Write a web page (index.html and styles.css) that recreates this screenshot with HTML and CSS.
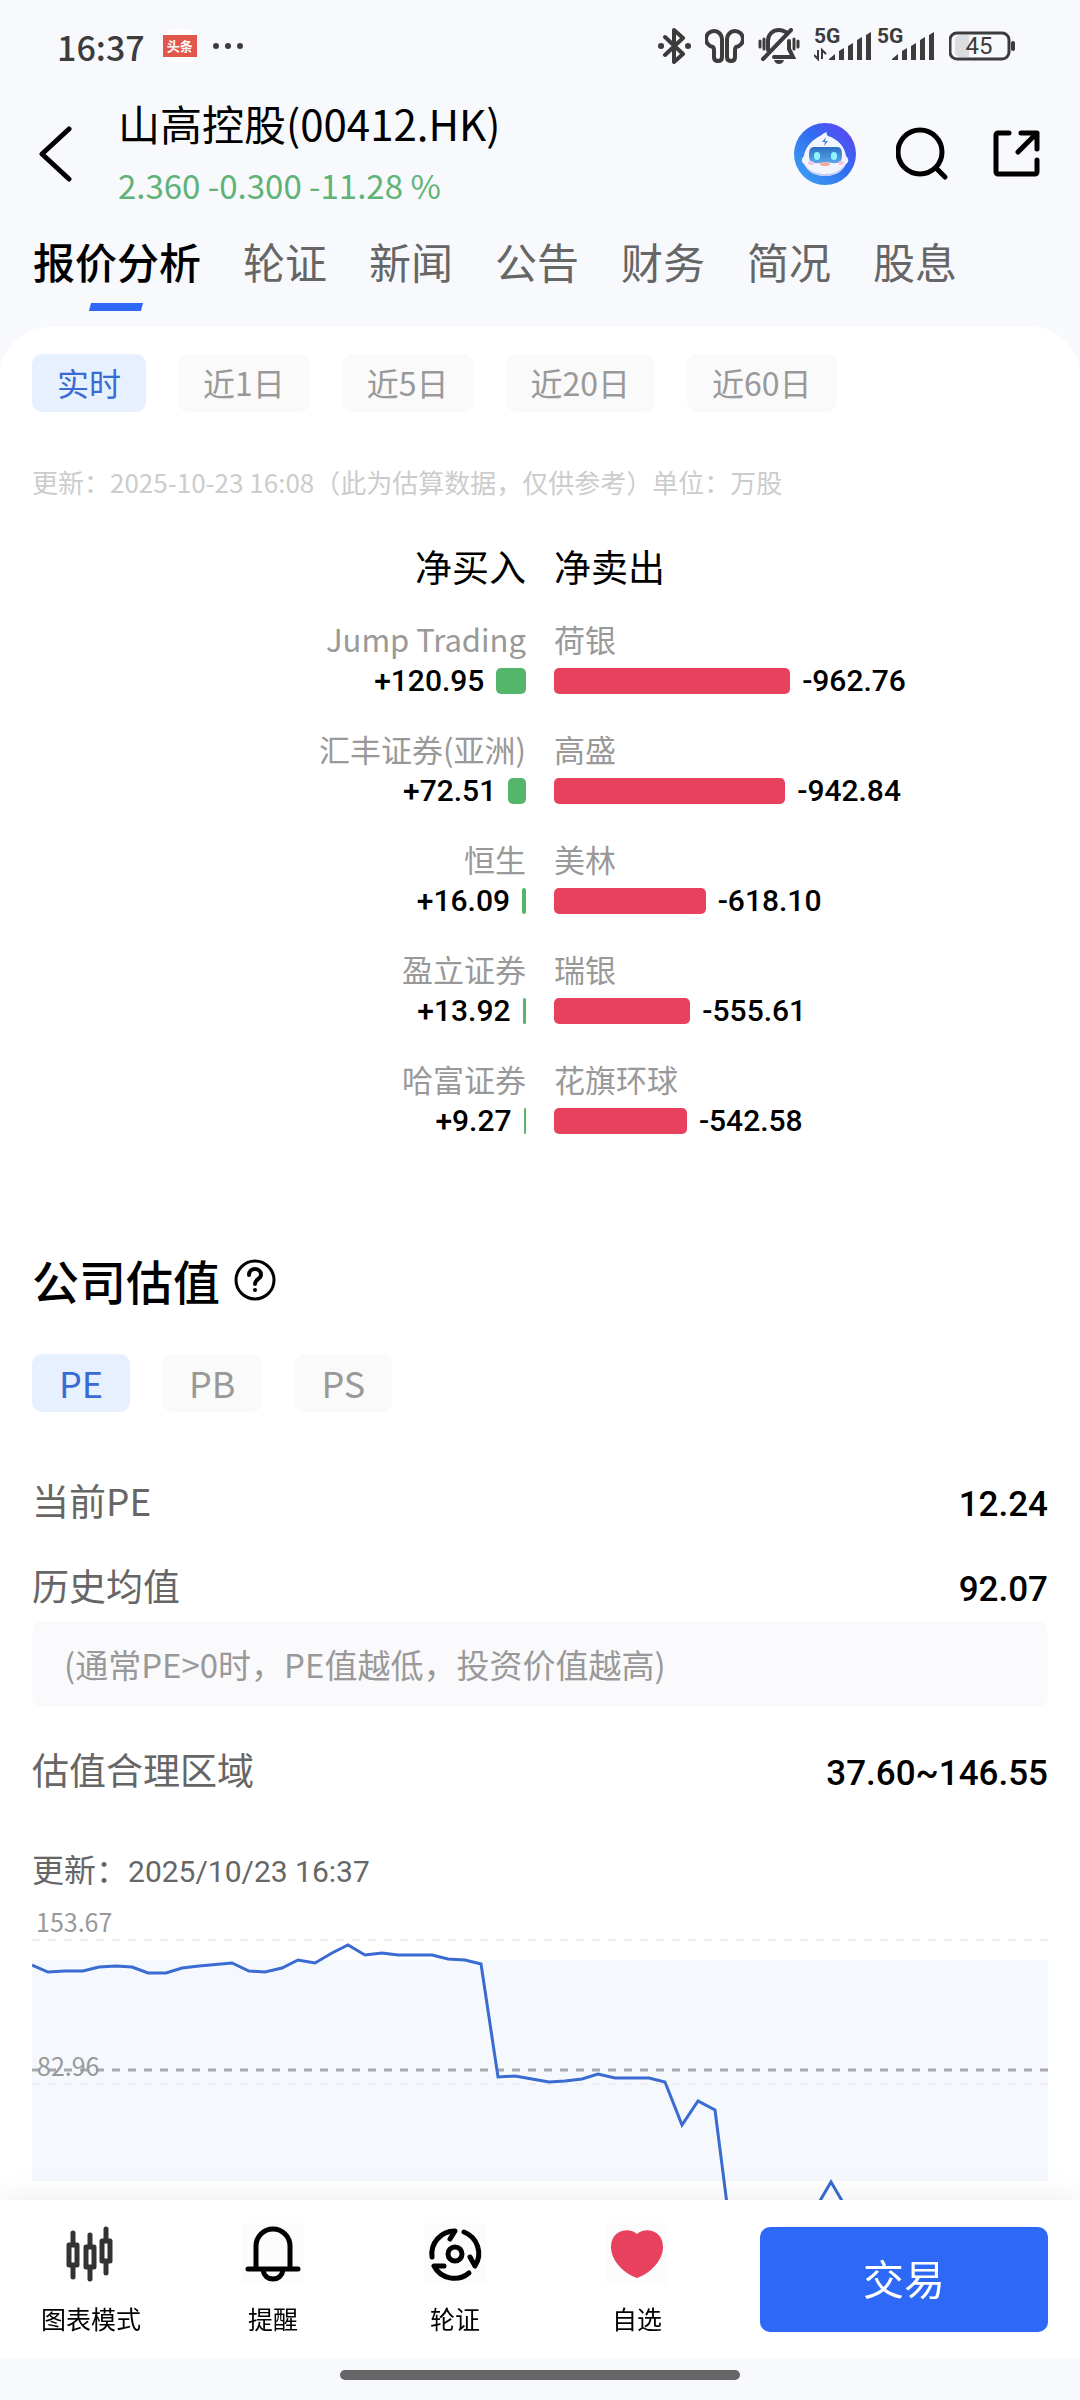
FILE: index.html
```html
<!DOCTYPE html>
<html lang="zh-CN">
<head>
<meta charset="UTF-8">
<meta name="viewport" content="width=device-width, initial-scale=1.0">
<title>山高控股(00412.HK)</title>
<link rel="stylesheet" href="styles.css">
</head>
<body>
    <div class="statusbar">
        <span class="time">16:37</span>
        <span class="news"><span>头条</span></span>
        <span class="dots"><i></i><i></i><i></i></span>
        <div class="status-icons">
            <svg class="bluetooth" width="33" height="36" viewBox="0 0 33 36" fill="none" stroke="#3c3c3c" stroke-width="4" stroke-linejoin="round" stroke-linecap="round">
                <path d="M7 9l18 17-9 8V2l9 8L7 27"/>
                <path d="M3 18h.1M30 18h.1" stroke-width="6"/>
            </svg>
            <svg class="buds" width="39" height="34" viewBox="0 0 39 34" fill="none" stroke="#3c3c3c" stroke-width="4" stroke-linejoin="round">
                <path d="M17 10a8 8 0 1 0-9 8c1 1 1 2 1 4v6c0 2 1 4 4 4s4-2 4-4z"/>
                <path d="M22 10a8 8 0 1 1 9 8c-1 1-1 2-1 4v6c0 2-1 4-4 4s-4-2-4-4z"/>
            </svg>
            <svg class="mute" width="42" height="36" viewBox="0 0 42 36" fill="none" stroke="#3c3c3c" stroke-width="3" stroke-linecap="round">
                <path d="M2 13v6M6 11v10M36 11v10M40 13v6"/>
                <path d="M10 22V13c0-7 5-11 11-11 3 0 5 1 7 2M31 13v8l4 8H16" stroke-width="4"/>
                <path d="M5 31L33 2" stroke-width="4"/>
                <path d="M16 32h10c-1 3-3 4-5 4s-4-1-5-4z" fill="#3c3c3c" stroke="none"/>
            </svg>
            <svg class="signal" width="58" height="50" viewBox="0 -8 58 50" fill="#3c3c3c">
                <text x="0" y="14">5G</text>
                <path d="M4 21v9l-4-4M8 30v-9l4 4" fill="none" stroke="#3c3c3c" stroke-width="2"/>
                <path d="M15 30l6-5v6h-6zM25 22l5-3v12h-5zM34 17l5-3v17h-5zM43 11l5-3v23h-5zM52 6l5-3v28h-5z"/>
            </svg>
            <svg class="signal" width="58" height="50" viewBox="0 -8 58 50" fill="#3c3c3c">
                <text x="0" y="14">5G</text>
                <path d="M15 30l6-5v6h-6zM25 22l5-3v12h-5zM34 17l5-3v17h-5zM43 11l5-3v23h-5zM52 6l5-3v28h-5z"/>
            </svg>
            <svg class="battery" width="66" height="30" viewBox="0 0 66 30">
                <path d="M11 4h9v22h-9a5 5 0 0 1-5-5V9a5 5 0 0 1 5-5z" fill="#dcdddf"/>
                <rect x="1" y="2" width="59" height="26" rx="7" fill="none" stroke="#3c3c3c" stroke-width="3"/>
                <rect x="62" y="10" width="4" height="10" rx="2" fill="#3c3c3c"/>
                <text x="30" y="23" text-anchor="middle">45</text>
            </svg>
        </div>
    </div>

    <header class="header">
        <button class="icon-btn back" aria-label="返回">
            <svg width="34" height="56" viewBox="0 0 34 56" fill="none" stroke="#000" stroke-width="5" stroke-linecap="round" stroke-linejoin="round"><path d="M31 3L4 28l27 25"/></svg>
        </button>
        <div class="stock">
            <h1>山高控股(00412.HK)</h1>
            <p>2.360 -0.300 -11.28 %</p>
        </div>
        <div class="actions">
            <button class="icon-btn" aria-label="助手">
                <svg width="62" height="62" viewBox="0 0 62 62">
                    <defs>
                        <linearGradient id="robotBg" x1="0" y1="1" x2="1" y2="0">
                            <stop offset="0" stop-color="#3fa9f2"/>
                            <stop offset="0.55" stop-color="#2f6cf0"/>
                            <stop offset="1" stop-color="#6a3df5"/>
                        </linearGradient>
                        <linearGradient id="robotVisor" x1="0" y1="0" x2="0" y2="1">
                            <stop offset="0" stop-color="#2f6fc4"/>
                            <stop offset="1" stop-color="#58a8e8"/>
                        </linearGradient>
                    </defs>
                    <circle cx="31" cy="31" r="31" fill="url(#robotBg)"/>
                    <path d="M33 9c-1 2 0 3 1 4 10 3 17 11 18 20 3 3 3 6 0 8-3 7-11 12-21 12s-18-5-21-12c-3-2-3-5 0-8 1-8 7-15 14-19 3-1 5-4 9-5z" fill="#f2f4ff"/>
                    <path d="M11 41c4 8 12 10 20 10s16-3 20-10c-1 7-9 12-20 12s-19-5-20-12z" fill="#c3cdf6"/>
                    <path d="M20 24h23c4 0 5 3 5 8 0 6-2 8-6 8-4 1-6-1-10-1s-6 2-10 1c-5 0-7-2-7-8 0-5 1-8 5-8z" fill="url(#robotVisor)"/>
                    <rect x="20" y="29" width="6" height="8" rx="3" fill="#8df3ff"/>
                    <rect x="37" y="29" width="6" height="8" rx="3" fill="#8df3ff"/>
                    <ellipse cx="17" cy="40" rx="3" ry="2" fill="#f3c6e4"/>
                    <ellipse cx="47" cy="40" rx="3" ry="2" fill="#f3c6e4"/>
                    <ellipse cx="31" cy="41" rx="5" ry="2" fill="#f0a9a5"/>
                    <path d="M32 14l-4 5h3l-1 4 4-5h-3z" fill="#4a7fe0"/>
                </svg>
            </button>
            <button class="icon-btn" aria-label="搜索">
                <svg width="56" height="56" viewBox="0 0 56 56" fill="none" stroke="#000" stroke-width="5" stroke-linecap="round"><circle cx="24" cy="26" r="22"/><path d="M40 42l9 9"/></svg>
            </button>
            <button class="icon-btn" aria-label="分享">
                <svg width="48" height="48" viewBox="0 0 48 48" fill="none" stroke="#000" stroke-width="5" stroke-linecap="round" stroke-linejoin="round"><path d="M17 3H6a2 2 0 0 0-2 2v37a2 2 0 0 0 2 2h37a2 2 0 0 0 2-2V30M29 3h16v16M44 4L26 22"/></svg>
            </button>
        </div>
    </header>

    <nav class="tabs">
        <a href="#quote" class="active">报价分析</a>
        <a href="#warrant">轮证</a>
        <a href="#news">新闻</a>
        <a href="#notice">公告</a>
        <a href="#finance">财务</a>
        <a href="#profile">简况</a>
        <a href="#dividend">股息</a>
    </nav>

    <main class="content">
        <div class="chips">
            <button class="active">实时</button>
            <button>近1日</button>
            <button>近5日</button>
            <button>近20日</button>
            <button>近60日</button>
        </div>
        <p class="hint">更新：2025-10-23 16:08（此为估算数据，仅供参考）单位：万股</p>

        <div class="brokers">
            <section class="buy">
                <h2>净买入</h2>
                <ul>
                    <li><span class="name">Jump Trading</span><div class="value">+120.95<i class="bar" style="width: 6%"></i></div></li>
                    <li><span class="name">汇丰证券(亚洲)</span><div class="value">+72.51<i class="bar" style="width: 3.6%"></i></div></li>
                    <li><span class="name">恒生</span><div class="value">+16.09<i class="bar" style="width: 0.8%"></i></div></li>
                    <li><span class="name">盈立证券</span><div class="value">+13.92<i class="bar" style="width: 0.7%"></i></div></li>
                    <li><span class="name">哈富证券</span><div class="value">+9.27<i class="bar" style="width: 0.5%"></i></div></li>
                </ul>
            </section>
            <section class="sell">
                <h2>净卖出</h2>
                <ul>
                    <li><span class="name">荷银</span><div class="value"><i class="bar" style="width: 47.8%"></i>-962.76</div></li>
                    <li><span class="name">高盛</span><div class="value"><i class="bar" style="width: 46.8%"></i>-942.84</div></li>
                    <li><span class="name">美林</span><div class="value"><i class="bar" style="width: 30.7%"></i>-618.10</div></li>
                    <li><span class="name">瑞银</span><div class="value"><i class="bar" style="width: 27.6%"></i>-555.61</div></li>
                    <li><span class="name">花旗环球</span><div class="value"><i class="bar" style="width: 26.9%"></i>-542.58</div></li>
                </ul>
            </section>
        </div>

        <h2 class="section-title">公司估值
            <button class="icon-btn" aria-label="说明">
                <svg width="42" height="42" viewBox="0 0 42 42" fill="none" stroke="#000" stroke-width="3" stroke-linecap="round"><circle cx="21" cy="21" r="19"/><path d="M15 16c0-4 3-6 6-6s6 2 6 6c0 4-6 4-6 9" stroke-width="4"/><circle cx="21" cy="31" r="2" fill="#000" stroke="none"/></svg>
            </button>
        </h2>
        <div class="chips chips-pe">
            <button class="active">PE</button>
            <button>PB</button>
            <button>PS</button>
        </div>

        <dl class="valuation">
            <div><dt>当前PE</dt><dd>12.24</dd></div>
            <div><dt>历史均值</dt><dd>92.07</dd></div>
        </dl>
        <p class="note">(通常PE&gt;0时，PE值越低，投资价值越高)</p>
        <dl class="valuation range">
            <div><dt>估值合理区域</dt><dd>37.60~146.55</dd></div>
        </dl>

        <p class="updated">更新：<span>2025/10/23 16:37</span></p>
        <svg class="chart" viewBox="0 0 1016 360">
            <rect x="0" y="60" width="1016" height="221" fill="#f5f9fe"/>
            <g stroke="#ebedf0" stroke-width="2" stroke-dasharray="8 8">
                <path d="M0 40H1016M0 184H1016"/>
            </g>
            <path d="M0 170H1016" stroke="#a6a8ab" stroke-width="3" stroke-dasharray="8 8"/>
            <text x="4" y="32">153.67</text>
            <text x="5" y="176">82.96</text>
            <polyline fill="none" stroke="#3a6bd0" stroke-width="3" points="0,65 16,72 33,71 51,71 67,67 84,66 100,67 116,73 134,73 150,68 167,66 200,63 217,71 233,72 250,68 266,60 283,63 300,53 316,45 333,55 350,53 366,55 400,55 416,59 433,60 449,64 466,177 483,176 500,179 517,182 533,181 550,179 566,174 583,178 617,178 633,182 650,225 666,201 683,210 697,320 716,345 733,340 750,348 766,340 782,311 799,282 816,311 833,342 866,348 916,345 966,350 1016,346"/>
        </svg>
    </main>

    <footer class="toolbar">
        <a href="#chart">
            <svg width="62" height="62" viewBox="0 0 62 62" fill="none" stroke="#333" stroke-width="5" stroke-linecap="round"><path d="M13 10v10M13 44v10M30 12v10M30 46v10M46 6v10M46 40v10"/><path d="M9 22h8v20H9zM26 24h8v20h-8zM42 18h8v20h-8z" stroke-linejoin="round"/></svg>
            图表模式
        </a>
        <a href="#alert">
            <svg class="tile" width="62" height="62" viewBox="0 0 62 62" fill="none" stroke="#000" stroke-width="5" stroke-linecap="round"><path d="M6 46h50M14 46V23a17 17 0 0 1 34 0v23M21 47c1 6 5 9 10 9s9-3 10-9"/></svg>
            提醒
        </a>
        <a href="#warrants">
            <svg class="tile" width="62" height="62" viewBox="0 0 62 62" fill="none" stroke="#000" stroke-width="5" stroke-linecap="round" stroke-linejoin="round"><circle cx="31" cy="31" r="7"/><path d="M8 34A23 23 0 0 1 31 8l-5 8"/><path d="M40 9A23 23 0 0 1 51 43l-5-9"/><path d="M45 50A23 23 0 0 1 10 43h10"/></svg>
            轮证
        </a>
        <a href="#watch">
            <svg class="tile" width="62" height="62" viewBox="0 0 62 62"><path d="M31 11C24 4 5 6 5 24c0 13 12 26 26 31 14-5 26-18 26-31C57 6 38 4 31 11z" fill="#e8415e"/></svg>
            自选
        </a>
        <button class="trade">交易</button>
    </footer>
    <div class="home-bar"></div>
</body>
</html>
```
FILE: styles.css
```css
/* Global styles */
* {
    box-sizing: border-box;
}
body {
    margin: 0;
    height: 100vh;
    display: flex;
    flex-direction: column;
    background-color: #f8f9fc;
    color: #000;
    font-family: "Noto Sans CJK SC", "Noto Sans", sans-serif;
}
h1, h2, p, ul, dl, dd {
    margin: 0;
    padding: 0;
    font-weight: 400;
}
ul {
    list-style: none;
}
a {
    color: inherit;
    text-decoration: none;
}
button {
    border: none;
    padding: 0;
    font-family: inherit;
    color: inherit;
    cursor: pointer;
}
svg {
    display: block;
}
.icon-btn {
    background: none;
}

/* Status bar */
.statusbar {
    flex: none;
    display: flex;
    align-items: center;
    height: 92px;
    padding: 0 65px 0 57px;
    color: #3c3c3c;
}
.time {
    font-size: 34px;
    font-weight: 500;
}
.news {
    display: flex;
    align-items: center;
    height: 34px;
    margin-left: 18px;
    border-radius: 10px;
    background-color: #fff;
}
.news span {
    width: 34px;
    background-color: #e2574c;
    color: #fff;
    font-size: 13px;
    font-weight: 700;
    line-height: 22px;
    text-align: center;
}
.dots {
    display: flex;
    gap: 6px;
    margin-left: 16px;
}
.dots i {
    width: 6px;
    height: 6px;
    border-radius: 50%;
    background-color: #3c3c3c;
}
.status-icons {
    display: flex;
    align-items: center;
    gap: 14px;
    margin-left: auto;
}
.signal + .signal {
    margin-left: -9px;
}
.signal text {
    font: 700 21px Roboto, sans-serif;
}
.battery text {
    font: 400 24px Roboto, sans-serif;
    fill: #3c3c3c;
}

/* Header */
.header {
    flex: none;
    display: flex;
    align-items: center;
    height: 124px;
    padding: 0 40px 0 38px;
}
.stock {
    margin-left: 46px;
}
.stock h1 {
    font-size: 42px;
    line-height: 62px;
}
.stock p {
    color: #5fb377;
    font-size: 33px;
    line-height: 62px;
}
.actions {
    display: flex;
    align-items: center;
    gap: 40px;
    margin-left: auto;
}

/* Tabs */
.tabs {
    flex: none;
    display: flex;
    gap: 42px;
    height: 111px;
    padding: 15px 33px 0;
    color: #666;
    font-size: 42px;
    line-height: 60px;
    white-space: nowrap;
}
.tabs a {
    position: relative;
}
.tabs .active {
    color: #000;
    font-weight: 500;
}
.tabs .active::after {
    content: "";
    position: absolute;
    left: 50%;
    bottom: 16px;
    width: 52px;
    height: 8px;
    margin-left: -27px;
    background-color: #2d69f6;
    transform: skewX(-15deg);
}

/* Content */
.content {
    flex: 1;
    min-height: 0;
    padding: 27px 32px 0;
    overflow-y: auto;
    scrollbar-width: none;
    border-radius: 48px 48px 0 0;
    background-color: #fff;
}
.chips {
    display: flex;
    gap: 32px;
}
.chips button {
    height: 58px;
    padding: 0 25px 2px;
    border-radius: 10px;
    background-color: #fafafa;
    color: #999;
    font-size: 32px;
}
.chips .active {
    background-color: #e6f0fe;
    color: #3a6bd2;
}
.chips-pe {
    margin-top: 44px;
}
.chips-pe button {
    padding: 0 27px 2px;
    font-size: 36px;
}
.hint {
    margin-top: 50px;
    color: #ccc;
    font-size: 26px;
    line-height: 40px;
}

/* Broker ranking */
.brokers {
    display: grid;
    grid-template-columns: 1fr 1fr;
    gap: 28px;
    margin-top: 36px;
}
.brokers h2 {
    font-size: 37px;
    line-height: 56px;
}
.brokers li {
    margin-bottom: 26px;
}
.brokers ul {
    margin: 25px 0 107px;
}
.name {
    display: block;
    color: #999;
    font-size: 31px;
    line-height: 40px;
}
.value {
    display: flex;
    align-items: center;
    gap: 12px;
    font: 500 30px/44px Roboto, sans-serif;
}
.bar {
    flex: none;
    height: 26px;
    border-radius: 5px;
}
.buy {
    text-align: right;
}
.buy .value {
    justify-content: flex-end;
}
.buy .bar {
    background-color: #54b66a;
}
.sell .bar {
    background-color: #e8415e;
}

/* Valuation */
.section-title {
    display: flex;
    align-items: center;
    gap: 14px;
    font-size: 47px;
    font-weight: 500;
    line-height: 60px;
}
.valuation {
    display: grid;
    gap: 35px;
    margin-top: 63px;
}
.valuation div {
    display: flex;
    align-items: baseline;
    justify-content: space-between;
    height: 50px;
}
.valuation dt {
    color: #666;
    font-size: 37px;
    line-height: 50px;
}
.valuation dd {
    font: 500 35px/50px Roboto, sans-serif;
}
.note {
    margin-top: 11px;
    padding: 0 32px;
    border-radius: 10px;
    background-color: #fafafc;
    color: #999;
    font-size: 33px;
    line-height: 86px;
}
.range {
    margin-top: 37px;
}
.updated {
    margin-top: 54px;
    color: #666;
    font-size: 32px;
    line-height: 40px;
}
.updated span {
    font-family: Roboto, sans-serif;
    font-size: 30px;
}
.chart {
    width: 100%;
    margin-top: 8px;
}
.chart text {
    fill: #999;
    font-size: 25px;
}

/* Bottom toolbar */
.toolbar {
    position: relative;
    flex: none;
    display: flex;
    align-items: center;
    height: 158px;
    padding-right: 32px;
    background-color: #fff;
    box-shadow: 0 0 32px rgba(0, 0, 0, 0.08);
    clip-path: inset(-40px 0 0 0);
}
.toolbar a {
    flex: 1;
    display: flex;
    flex-direction: column;
    align-items: center;
    gap: 14px;
    padding-top: 2px;
    font-size: 25px;
    line-height: 38px;
}
.tile {
    background-color: #fcfcfc;
}
.trade {
    width: 288px;
    height: 105px;
    margin-left: 32px;
    padding-bottom: 4px;
    border-radius: 10px;
    background-color: #2d69f6;
    color: #fff;
    font-size: 41px;
}
.home-bar {
    flex: none;
    align-self: center;
    width: 37%;
    height: 10px;
    margin: 12px 0 20px;
    border-radius: 5px;
    background-color: #666;
}
```
